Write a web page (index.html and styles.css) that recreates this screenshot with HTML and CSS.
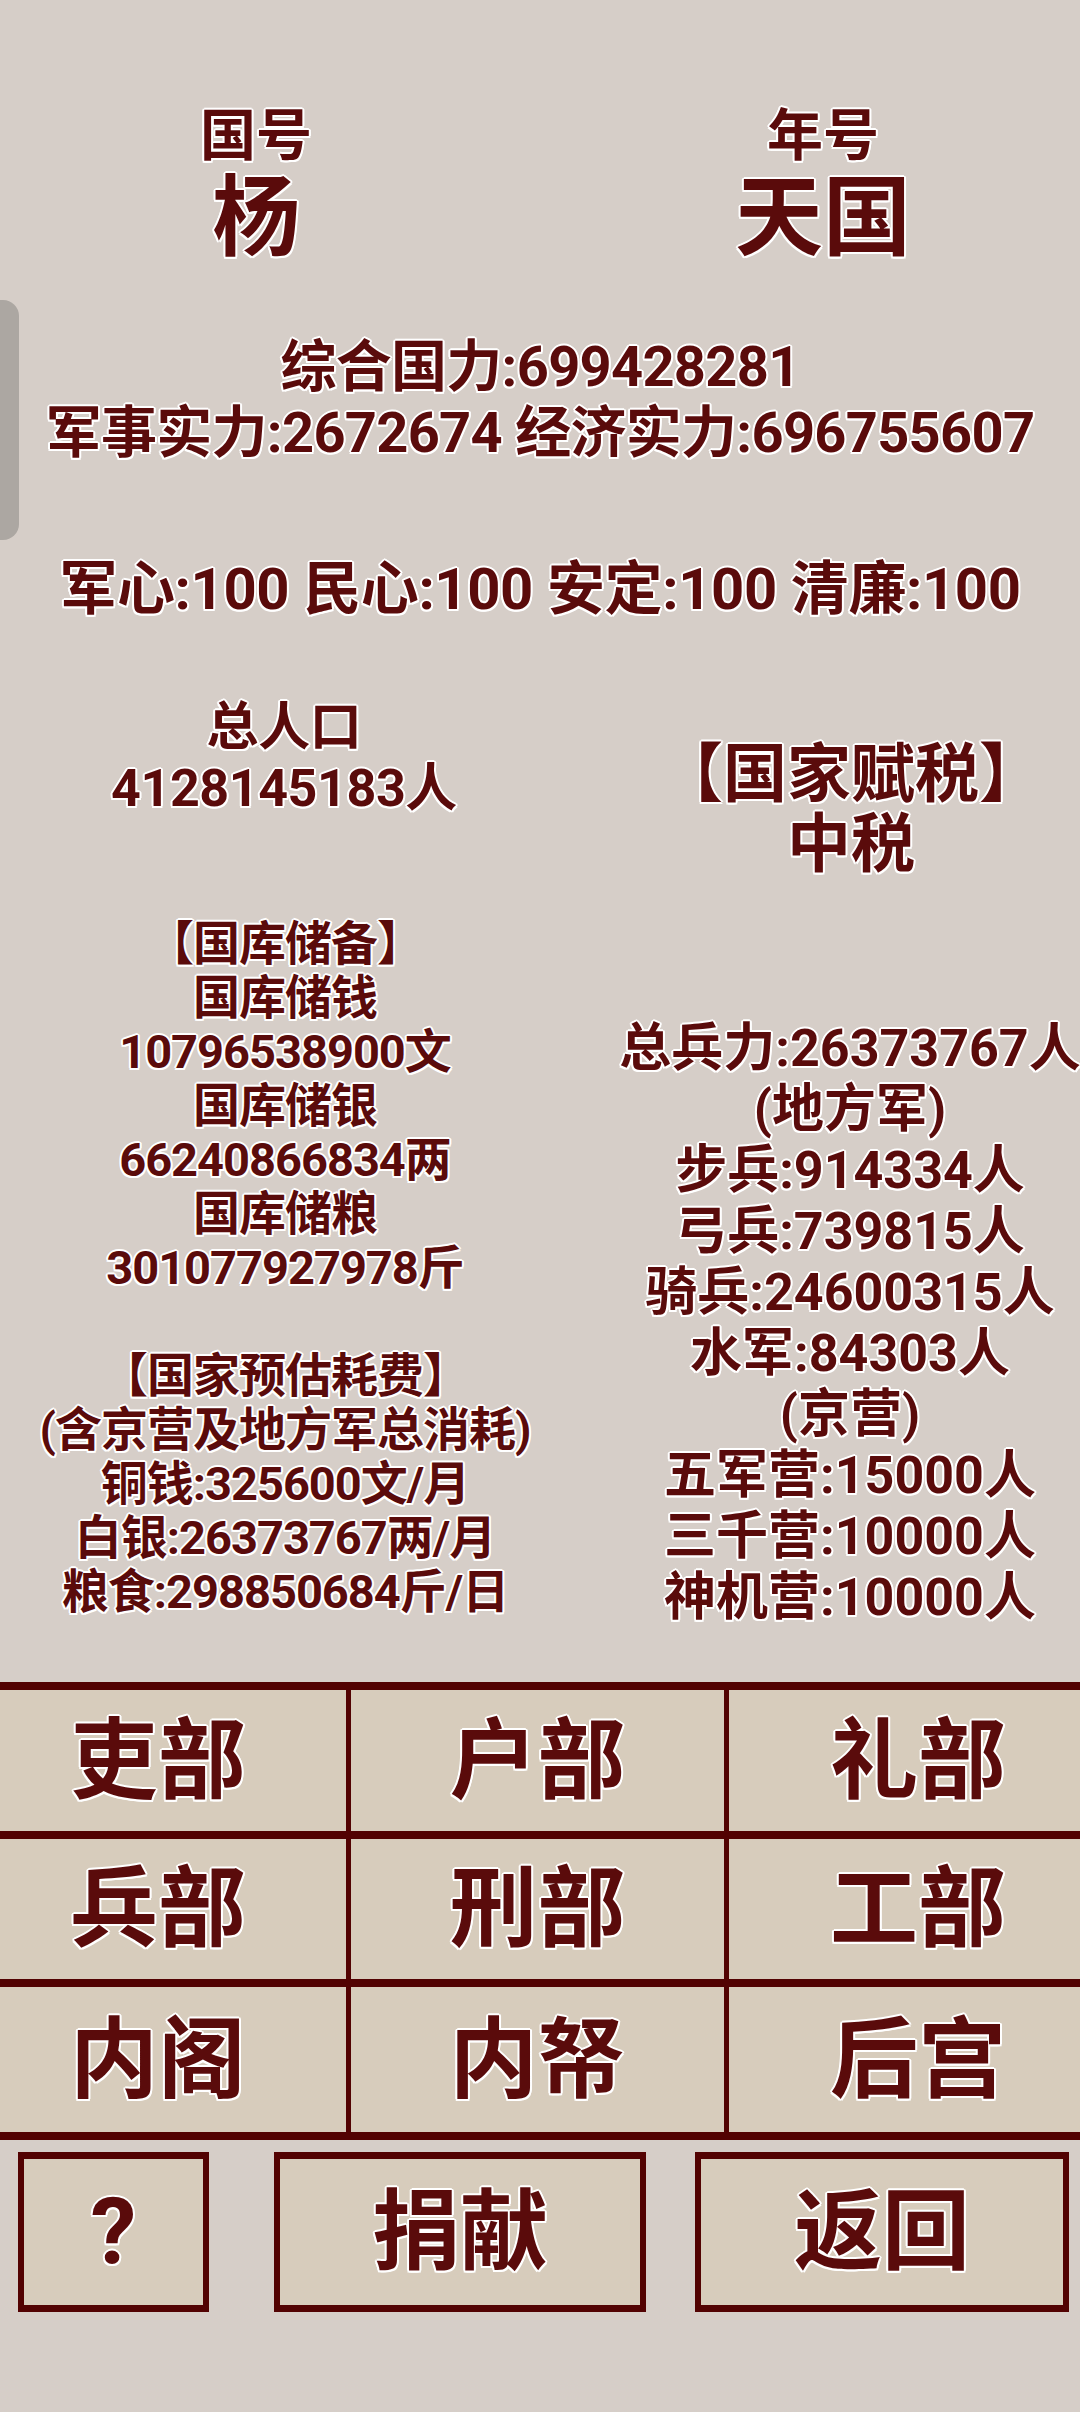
FILE: index.html
```html
<!DOCTYPE html>
<html lang="zh-CN">
<head>
<meta charset="utf-8">
<title>国情</title>
<link rel="stylesheet" href="styles.css">
</head>
<body>
<div class="scroll-thumb"></div>
<main class="page">
  <section class="title-row">
    <div class="title-col">
      <div class="title-label">国号</div>
      <div class="title-value">杨</div>
    </div>
    <div class="title-col">
      <div class="title-label">年号</div>
      <div class="title-value">天国</div>
    </div>
  </section>

  <section class="power">
    <div class="power-line">综合国力:699428281</div>
    <div class="power-line">军事实力:2672674 经济实力:696755607</div>
  </section>

  <div class="morale">军心:100 民心:100 安定:100 清廉:100</div>

  <section class="pop-row">
    <div class="pop col">
      <div>总人口</div>
      <div>4128145183人</div>
    </div>
    <div class="tax col">
      <div>【国家赋税】</div>
      <div>中税</div>
    </div>
  </section>

  <section class="stock-row">
    <div class="stock col">
      <div>【国库储备】</div>
      <div>国库储钱</div>
      <div>10796538900文</div>
      <div>国库储银</div>
      <div>66240866834两</div>
      <div>国库储粮</div>
      <div>301077927978斤</div>
      <div class="blank"></div>
      <div>【国家预估耗费】</div>
      <div>(含京营及地方军总消耗)</div>
      <div>铜钱:325600文/月</div>
      <div>白银:26373767两/月</div>
      <div>粮食:298850684斤/日</div>
    </div>
    <div class="army col">
      <div>总兵力:26373767人</div>
      <div>(地方军)</div>
      <div>步兵:914334人</div>
      <div>弓兵:739815人</div>
      <div>骑兵:24600315人</div>
      <div>水军:84303人</div>
      <div>(京营)</div>
      <div>五军营:15000人</div>
      <div>三千营:10000人</div>
      <div>神机营:10000人</div>
    </div>
  </section>

  <nav class="dept-grid">
    <div class="dept">吏部</div>
    <div class="dept">户部</div>
    <div class="dept">礼部</div>
    <div class="dept">兵部</div>
    <div class="dept">刑部</div>
    <div class="dept">工部</div>
    <div class="dept">内阁</div>
    <div class="dept">内帑</div>
    <div class="dept">后宫</div>
  </nav>

  <div class="actions">
    <div class="btn btn-help">?</div>
    <div class="btn btn-donate">捐献</div>
    <div class="btn btn-back">返回</div>
  </div>
</main>
</body>
</html>
```

FILE: styles.css
```css
html, body {
  margin: 0;
  padding: 0;
}

body {
  width: 1080px;
  height: 2412px;
  overflow: hidden;
  background: #d6cec8;
  font-family: Roboto, "Noto Sans CJK SC", sans-serif;
  font-weight: 700;
  font-feature-settings: "halt";
  color: #5a0b0b;
  position: relative;
}

.page {
  width: 1080px;
  text-shadow:
    2px 0 #fff, -2px 0 #fff, 0 2px #fff, 0 -2px #fff,
    1.5px 1.5px #fff, -1.5px 1.5px #fff, 1.5px -1.5px #fff, -1.5px -1.5px #fff;
}

.scroll-thumb {
  position: absolute;
  left: 0;
  top: 300px;
  width: 19px;
  height: 240px;
  background: #aca7a2;
  border-radius: 0 16px 16px 0;
}

/* title */
.title-row {
  display: grid;
  grid-template-columns: 512px 514px;
  justify-content: space-between;
  padding-top: 104px;
}

.title-col {
  text-align: center;
}

.title-label {
  font-size: 56px;
  line-height: 64px;
}

.title-value {
  font-size: 88px;
  line-height: 100px;
}

/* power */
.power {
  margin-top: 66px;
  text-align: center;
}

.power-line {
  font-size: 56px;
  line-height: 66px;
  letter-spacing: -0.7px;
  white-space: nowrap;
}

.morale {
  margin-top: 88px;
  text-align: center;
  font-size: 58px;
  line-height: 70px;
  letter-spacing: -0.4px;
  white-space: nowrap;
}

.col {
  display: flex;
  flex-direction: column;
  align-items: center;
  white-space: nowrap;
}

/* population / tax */
.pop-row {
  display: grid;
  grid-template-columns: 568px 458px;
  justify-content: space-between;
  align-items: start;
  margin-top: 73px;
}

.pop {
  font-size: 52px;
  line-height: 61px;
  letter-spacing: -0.4px;
}

.tax {
  padding-top: 43px;
  font-size: 64px;
  line-height: 70px;
}

/* stock / army */
.stock-row {
  display: grid;
  grid-template-columns: 570px 460px;
  justify-content: space-between;
  align-items: start;
  margin-top: 37px;
}

.stock {
  font-size: 47px;
  line-height: 54px;
  letter-spacing: -1px;
}

.stock .blank {
  height: 54px;
}

.army {
  padding-top: 101px;
  font-size: 52px;
  line-height: 61px;
}

/* department grid */
.dept-grid {
  display: grid;
  grid-template-columns: 376px 373px 378px;
  grid-template-rows: 141px 140px 145px;
  column-gap: 5px;
  row-gap: 8px;
  padding: 8px 0;
  margin-top: 54px;
  margin-left: -30px;
  width: 1137px;
  background: #520202;
}

.dept {
  background: #d7ccbc;
  display: flex;
  align-items: center;
  justify-content: center;
  font-size: 88px;
  line-height: 1;
}

/* bottom actions */
.actions {
  display: flex;
  margin-top: 12px;
  padding-left: 18px;
}

.btn {
  box-sizing: border-box;
  height: 160px;
  background: #d7ccbc;
  border-style: solid;
  border-color: #520202;
  border-width: 7px 6px;
  display: flex;
  align-items: center;
  justify-content: center;
  font-size: 88px;
  line-height: 1;
}

.btn-help {
  width: 191px;
  font-size: 92px;
}

.btn-donate {
  width: 372px;
  margin-left: 65px;
}

.btn-back {
  width: 374px;
  margin-left: 49px;
}
```
